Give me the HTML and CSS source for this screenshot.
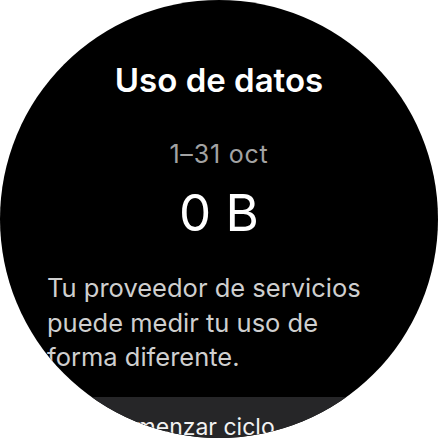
FILE: index.html
```html
<!DOCTYPE html>
<html lang="es">
<head>
<meta charset="utf-8">
<title>Uso de datos</title>
<link rel="stylesheet" href="styles.css">
</head>
<body>
<div class="watch">
  <h1 class="title">Uso de datos</h1>
  <div class="period">1–31 oct</div>
  <div class="amount">0 B</div>
  <p class="note">Tu proveedor de servicios puede medir tu uso de forma diferente.</p>
  <div class="chip"><span class="chip-label">Comenzar ciclo</span></div>
</div>
</body>
</html>
```
FILE: styles.css
```css
html, body {
  margin: 0;
  padding: 0;
  background: #ffffff;
}
.watch {
  width: 438px;
  height: 438px;
  border-radius: 50%;
  background: #000000;
  overflow: hidden;
  display: flex;
  flex-direction: column;
  align-items: center;
  font-family: Inter, "Noto Sans", sans-serif;
  color: #ffffff;
  box-sizing: border-box;
  padding-top: 60px;
}
.title {
  margin: 0;
  font-size: 33px;
  line-height: 40px;
  font-weight: 600;
  letter-spacing: 0;
}
.period {
  margin-top: 39px;
  font-size: 25px;
  line-height: 30px;
  color: #a3a3a3;
  letter-spacing: 0.8px;
}
.amount {
  margin-top: 16px;
  font-size: 51px;
  line-height: 56px;
  font-weight: 400;
}
.note {
  align-self: stretch;
  margin: 30px 0 0;
  padding: 0 60px 0 47px;
  font-size: 25.5px;
  line-height: 34.5px;
  color: #cfcfcf;
  letter-spacing: 0;
}
.chip {
  margin-top: 22px;
  width: 300px;
  box-sizing: border-box;
  padding: 15px 0 9px 36px;
  background: #262628;
  border-radius: 40px;
  flex-shrink: 0;
}
.chip-label {
  font-size: 23px;
  line-height: 30px;
  color: #f2f2f2;
}
```
